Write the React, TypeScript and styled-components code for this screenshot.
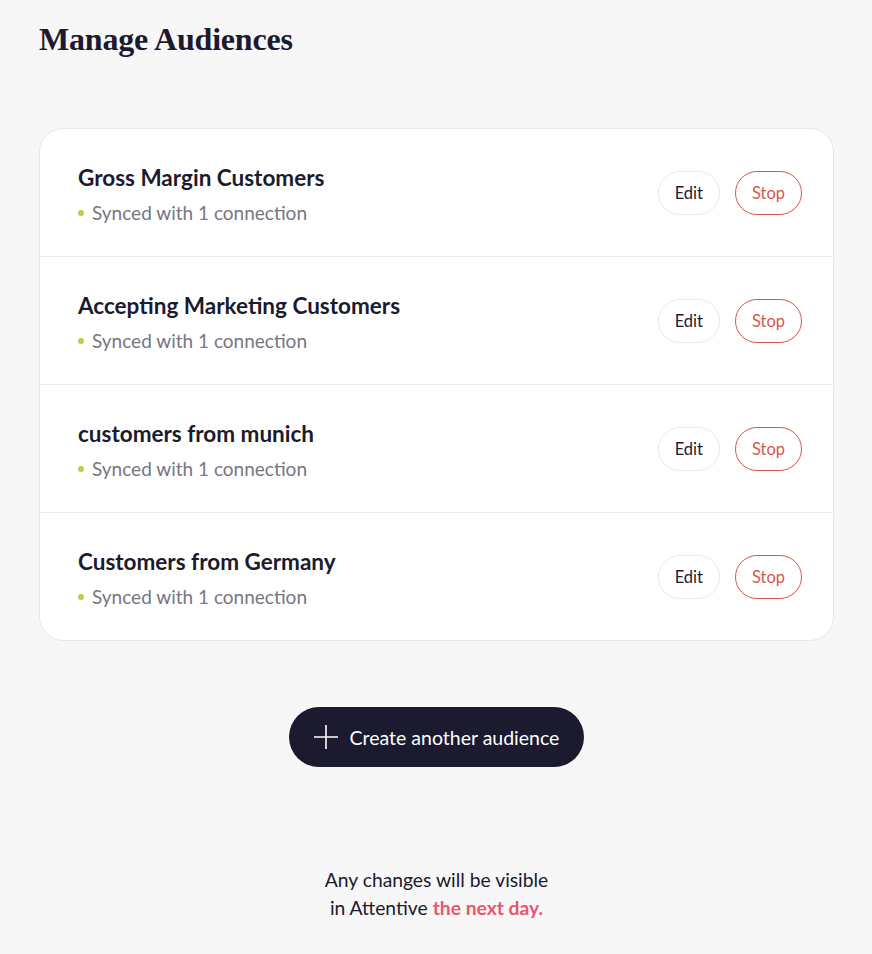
import React from 'react';
import styled, { createGlobalStyle } from 'styled-components';

const GlobalStyle = createGlobalStyle`
  html, body {
    margin: 0;
    padding: 0;
    background: #f7f7f7;
    font-family: Lato, 'Liberation Sans', sans-serif;
    color: #1b1a2e;
  }
`;

const audiences = [
  { name: 'Gross Margin Customers', connections: 1 },
  { name: 'Accepting Marketing Customers', connections: 1 },
  { name: 'customers from munich', connections: 1 },
  { name: 'Customers from Germany', connections: 1 },
];

const Page = styled.div`
  width: 872px;
  min-height: 954px;
  box-sizing: border-box;
  padding: 20px 38px 0 39px;
  display: flex;
  flex-direction: column;
`;

const Title = styled.h1`
  margin: 0;
  font-family: 'Liberation Serif', 'DejaVu Serif', serif;
  font-weight: 700;
  font-size: 32px;
  line-height: 38px;
  letter-spacing: -0.2px;
  color: #1b1a2e;
`;

const Card = styled.div`
  margin-top: 70px;
  background: #fff;
  border: 1px solid #e7e7e7;
  border-radius: 24px;
  overflow: hidden;
`;

const Row = styled.div`
  height: 127px;
  display: flex;
  align-items: center;
  justify-content: space-between;
  padding: 0 31px 0 38px;

  & + & {
    border-top: 1px solid #ebebeb;
  }
`;

const Info = styled.div`
  display: flex;
  flex-direction: column;
  gap: 10px;
  padding-top: 4px;
`;

const Name = styled.div`
  font-size: 22.5px;
  font-weight: 700;
  line-height: 26px;
  color: #1b1a2e;
`;

const Status = styled.div`
  display: flex;
  align-items: center;
  gap: 8px;
  font-size: 19px;
  line-height: 24px;
  color: #777585;

  &::before {
    content: '';
    width: 6px;
    height: 6px;
    border-radius: 50%;
    background: #b6d14b;
  }
`;

const Actions = styled.div`
  display: flex;
  gap: 15px;
`;

const Pill = styled.button<{ $danger?: boolean }>`
  height: 44px;
  padding: 0 16px;
  border-radius: 22px;
  background: #fff;
  border: 1px solid ${(p) => (p.$danger ? '#d9574c' : '#e8e8e8')};
  color: ${(p) => (p.$danger ? '#d9574c' : '#1b1a2e')};
  font-family: Lato, sans-serif;
  font-size: 16.5px;
  cursor: pointer;
`;

const CreateWrap = styled.div`
  display: flex;
  justify-content: center;
  margin-top: 66px;
`;

const CreateButton = styled.button`
  display: flex;
  align-items: center;
  gap: 11px;
  height: 60px;
  padding: 0 25px 0 24px;
  border: none;
  border-radius: 30px;
  background: #1b1a2e;
  color: #fff;
  font-family: Lato, sans-serif;
  font-size: 19.5px;
  cursor: pointer;
`;

const Note = styled.p`
  margin: 99px 0 0;
  text-align: center;
  font-size: 19.3px;
  line-height: 28px;
  color: #1b1a2e;
`;

const Highlight = styled.span`
  color: #e8566f;
  font-weight: 700;
`;

const PlusIcon = () => (
  <svg width="26" height="26" viewBox="0 0 26 26" fill="none" stroke="#fff" strokeWidth="1.6">
    <path d="M13 1v24M1 13h24" />
  </svg>
);

export default function App() {
  return (
    <Page>
      <GlobalStyle />
      <Title>Manage Audiences</Title>
      <Card>
        {audiences.map((a) => (
          <Row key={a.name}>
            <Info>
              <Name>{a.name}</Name>
              <Status>
                Synced with {a.connections} connection{a.connections === 1 ? '' : 's'}
              </Status>
            </Info>
            <Actions>
              <Pill>Edit</Pill>
              <Pill $danger>Stop</Pill>
            </Actions>
          </Row>
        ))}
      </Card>
      <CreateWrap>
        <CreateButton>
          <PlusIcon />
          Create another audience
        </CreateButton>
      </CreateWrap>
      <Note>
        Any changes will be visible
        <br />
        in Attentive <Highlight>the next day.</Highlight>
      </Note>
    </Page>
  );
}
